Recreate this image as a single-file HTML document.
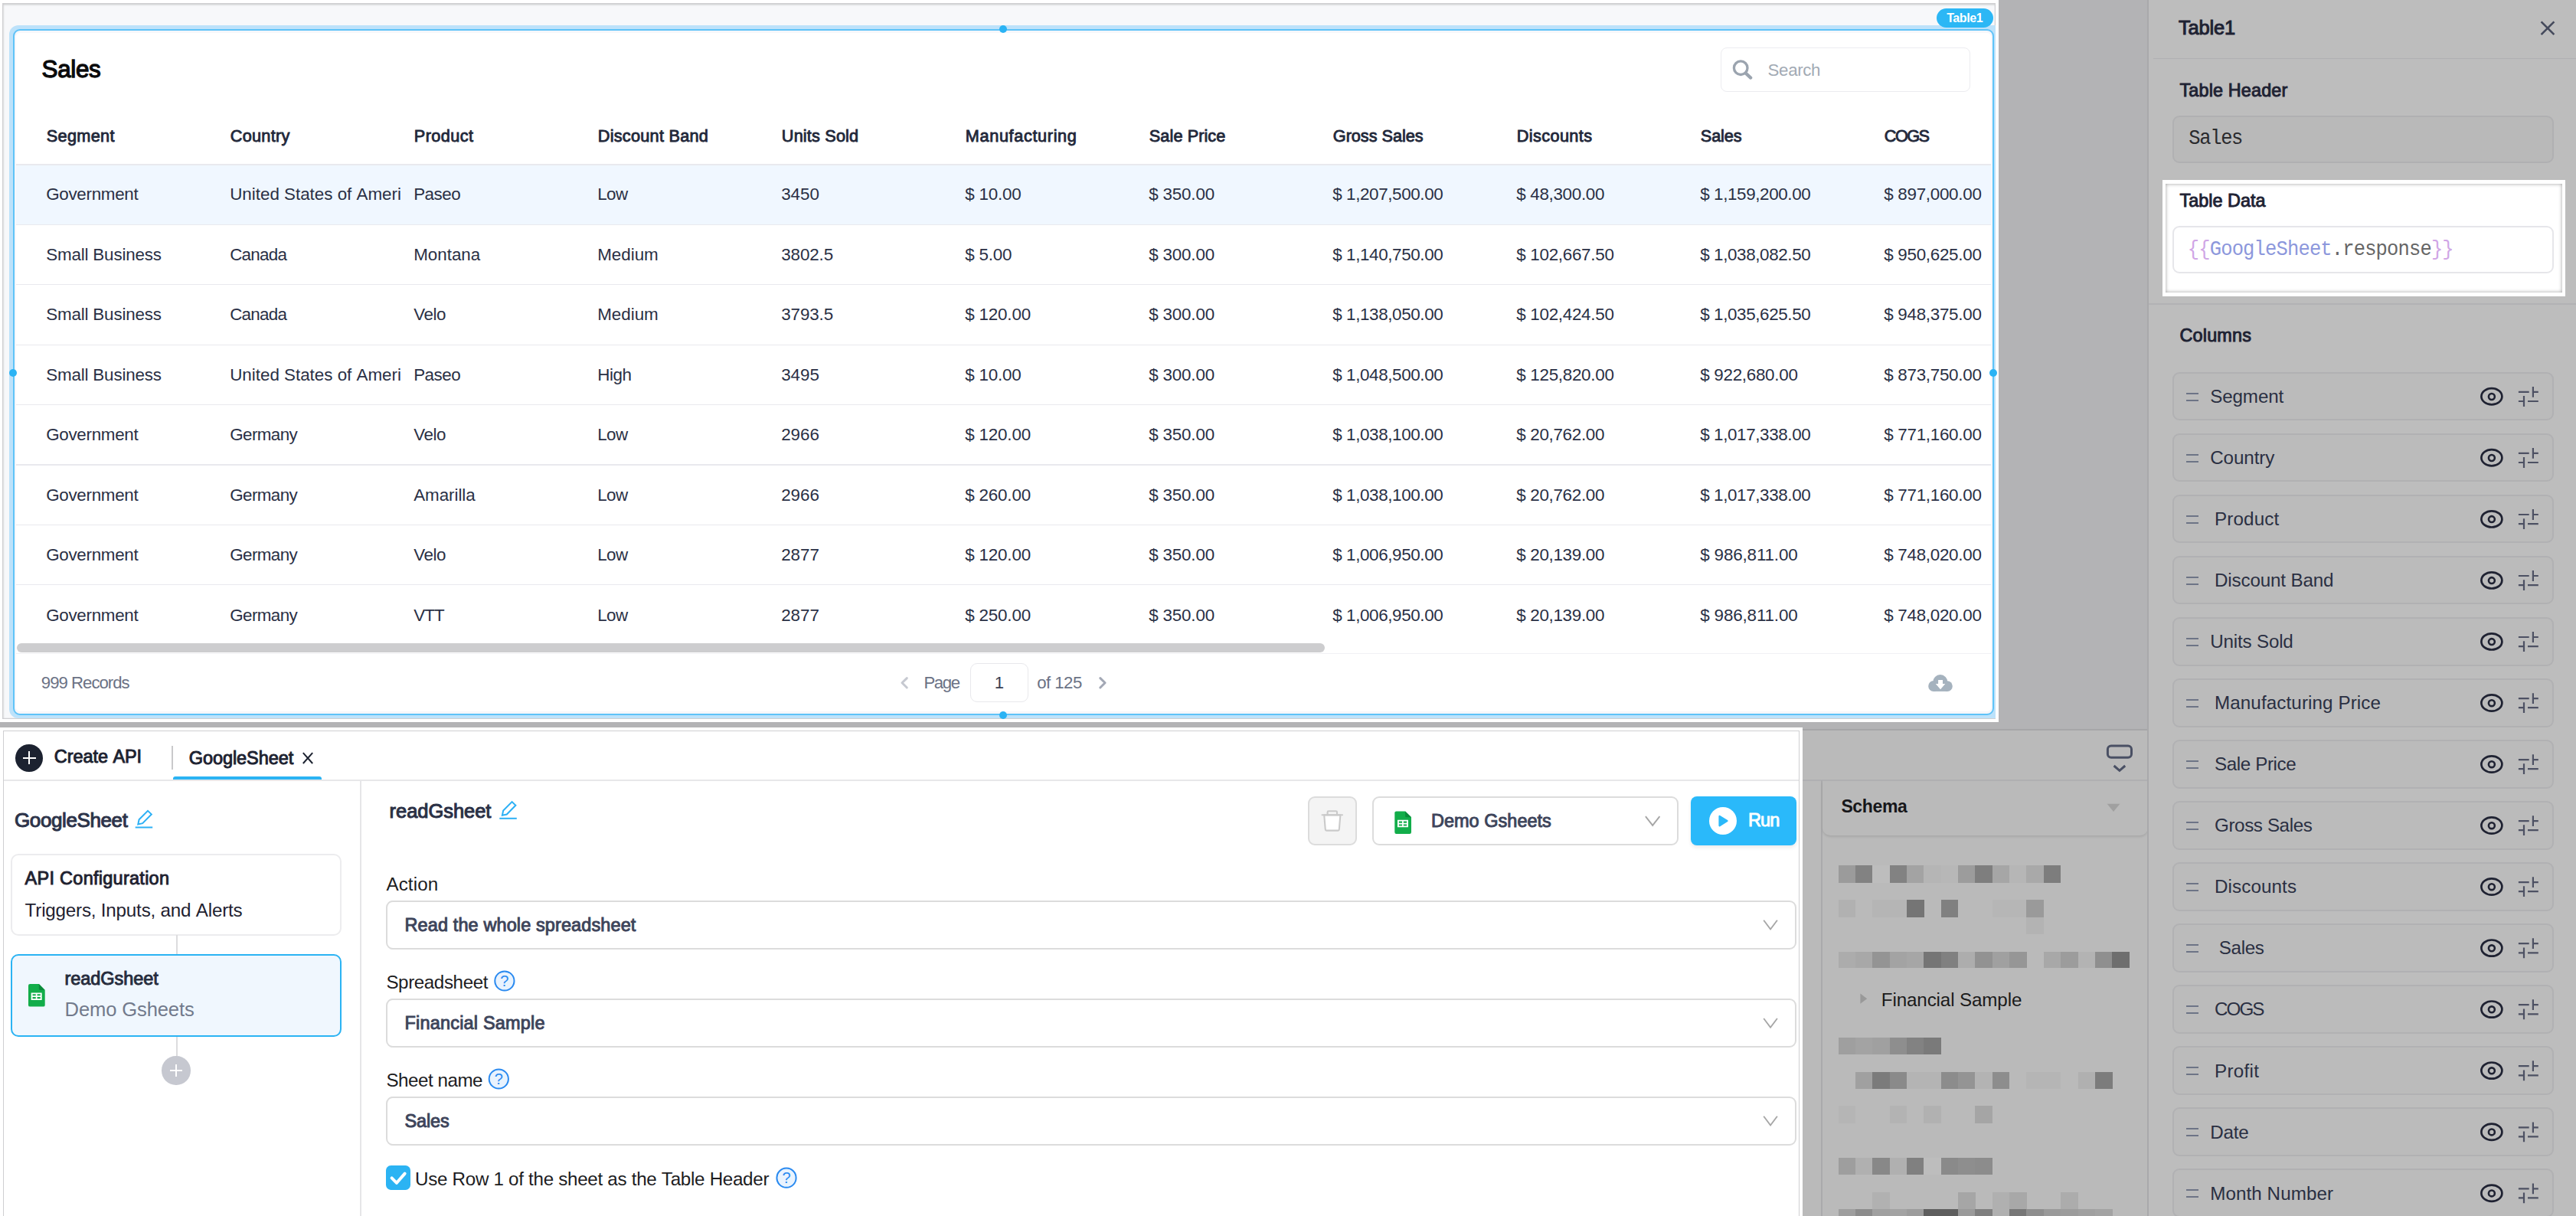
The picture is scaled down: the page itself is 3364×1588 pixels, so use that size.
<!DOCTYPE html>
<html><head><meta charset="utf-8"><title>Appsmith</title>
<style>
html,body{margin:0;padding:0}
body{width:3364px;height:1588px;overflow:hidden;position:relative;background:#b3b3b5;font-family:"Liberation Sans",sans-serif}
.a{position:absolute;box-sizing:border-box}
.t{position:absolute;white-space:nowrap}
svg{position:absolute;overflow:visible}
</style></head><body>
<div class="a" style="left:0.00px;top:0.00px;width:2610.00px;height:943.00px;background:#fff"></div>
<div class="a" style="left:3.20px;top:3.90px;width:2602.80px;height:935.10px;background:#f7f8fa;box-shadow:inset 0 0 0 1.2px #cfcfd2, inset 1px 2px 3px rgba(0,0,0,.2)"></div>
<div class="a" style="left:12.40px;top:33.30px;width:2593.60px;height:905.10px;background:#bde2fa;border-radius:12px 0 0 12px"></div>
<div class="a" style="left:16.90px;top:37.80px;width:2586.90px;height:895.90px;background:#f6f7fb;border:2.4px solid #5fc3f8;border-radius:9px"></div>
<div class="a" style="left:21.40px;top:42.70px;width:2578.30px;height:886.00px;background:#fff;border-radius:5px"></div>
<div class="a" style="left:21.40px;top:214.60px;width:2578.30px;height:78.40px;background:#f0f7ff"></div>
<div class="a" style="left:21.40px;top:214.30px;width:2578.30px;height:1.30px;background:#e9e9ee"></div>
<div class="a" style="left:21.40px;top:292.70px;width:2578.30px;height:1.30px;background:#e9e9ee"></div>
<div class="a" style="left:21.40px;top:371.10px;width:2578.30px;height:1.30px;background:#e9e9ee"></div>
<div class="a" style="left:21.40px;top:449.50px;width:2578.30px;height:1.30px;background:#e9e9ee"></div>
<div class="a" style="left:21.40px;top:527.90px;width:2578.30px;height:1.30px;background:#e9e9ee"></div>
<div class="a" style="left:21.40px;top:606.30px;width:2578.30px;height:1.30px;background:#e9e9ee"></div>
<div class="a" style="left:21.40px;top:684.70px;width:2578.30px;height:1.30px;background:#e9e9ee"></div>
<div class="a" style="left:21.40px;top:763.10px;width:2578.30px;height:1.30px;background:#e9e9ee"></div>
<div class="t" style="left:54.50px;top:73px;font:400 31.4px/35px 'Liberation Sans',sans-serif;color:#0b0b0c;letter-spacing:-0.309px;-webkit-text-stroke:1.26px #0b0b0c;">Sales</div>
<div class="a" style="left:2246.80px;top:62.30px;width:326.20px;height:57.40px;border:1.6px solid #ececf0;border-radius:8px;background:#fff"></div>
<svg style="left:0;top:0;" width="3364" height="1588" viewBox="0 0 3364 1588"><circle cx="2273.2" cy="88.7" r="8.8" fill="none" stroke="#9ba4af" stroke-width="3.3"/><path d="M2279.8 95.6 L2286.2 101.6" stroke="#9ba4af" stroke-width="4.2" stroke-linecap="round"/></svg>
<div class="t" style="left:2308.60px;top:79px;font:400 22.3px/25px 'Liberation Sans',sans-serif;color:#a2aab4;letter-spacing:-0.360px;">Search</div>
<div class="t" style="left:60.80px;top:165px;font:400 21.7px/25px 'Liberation Sans',sans-serif;color:#22283a;letter-spacing:0.307px;-webkit-text-stroke:0.87px #22283a;">Segment</div>
<div class="t" style="left:300.80px;top:165px;font:400 21.7px/25px 'Liberation Sans',sans-serif;color:#22283a;letter-spacing:0.260px;-webkit-text-stroke:0.87px #22283a;">Country</div>
<div class="t" style="left:540.80px;top:165px;font:400 21.7px/25px 'Liberation Sans',sans-serif;color:#22283a;letter-spacing:0.431px;-webkit-text-stroke:0.87px #22283a;">Product</div>
<div class="t" style="left:780.80px;top:165px;font:400 21.7px/25px 'Liberation Sans',sans-serif;color:#22283a;letter-spacing:0.251px;-webkit-text-stroke:0.87px #22283a;">Discount&nbsp;Band</div>
<div class="t" style="left:1020.80px;top:165px;font:400 21.7px/25px 'Liberation Sans',sans-serif;color:#22283a;letter-spacing:0.170px;-webkit-text-stroke:0.87px #22283a;">Units&nbsp;Sold</div>
<div class="t" style="left:1260.80px;top:165px;font:400 21.7px/25px 'Liberation Sans',sans-serif;color:#22283a;letter-spacing:0.638px;-webkit-text-stroke:0.87px #22283a;">Manufacturing</div>
<div class="t" style="left:1500.80px;top:165px;font:400 21.7px/25px 'Liberation Sans',sans-serif;color:#22283a;letter-spacing:0.080px;-webkit-text-stroke:0.87px #22283a;">Sale&nbsp;Price</div>
<div class="t" style="left:1740.80px;top:165px;font:400 21.7px/25px 'Liberation Sans',sans-serif;color:#22283a;letter-spacing:-0.035px;-webkit-text-stroke:0.87px #22283a;">Gross&nbsp;Sales</div>
<div class="t" style="left:1980.80px;top:165px;font:400 21.7px/25px 'Liberation Sans',sans-serif;color:#22283a;letter-spacing:0.380px;-webkit-text-stroke:0.87px #22283a;">Discounts</div>
<div class="t" style="left:2220.80px;top:165px;font:400 21.7px/25px 'Liberation Sans',sans-serif;color:#22283a;letter-spacing:-0.136px;-webkit-text-stroke:0.87px #22283a;">Sales</div>
<div class="t" style="left:2460.80px;top:165px;font:400 21.7px/25px 'Liberation Sans',sans-serif;color:#22283a;letter-spacing:-1.576px;-webkit-text-stroke:0.87px #22283a;">COGS</div>
<div class="t" style="left:60.20px;top:241px;font:400 22.4px/25px 'Liberation Sans',sans-serif;color:#2a3045;letter-spacing:-0.296px;">Government</div>
<div class="t" style="left:300.20px;top:241px;font:400 22.4px/25px 'Liberation Sans',sans-serif;color:#2a3045;letter-spacing:-0.012px;">United&nbsp;States&nbsp;of&nbsp;Ameri</div>
<div class="t" style="left:540.20px;top:241px;font:400 22.4px/25px 'Liberation Sans',sans-serif;color:#2a3045;letter-spacing:-0.503px;">Paseo</div>
<div class="t" style="left:780.20px;top:241px;font:400 22.4px/25px 'Liberation Sans',sans-serif;color:#2a3045;letter-spacing:-0.531px;">Low</div>
<div class="t" style="left:1020.20px;top:241px;font:400 22.4px/25px 'Liberation Sans',sans-serif;color:#2a3045;letter-spacing:-0.038px;">3450</div>
<div class="t" style="left:1260.20px;top:241px;font:400 22.4px/25px 'Liberation Sans',sans-serif;color:#2a3045;letter-spacing:-0.191px;">$&nbsp;10.00</div>
<div class="t" style="left:1500.20px;top:241px;font:400 22.4px/25px 'Liberation Sans',sans-serif;color:#2a3045;letter-spacing:-0.172px;">$&nbsp;350.00</div>
<div class="t" style="left:1740.20px;top:241px;font:400 22.4px/25px 'Liberation Sans',sans-serif;color:#2a3045;letter-spacing:-0.378px;">$&nbsp;1,207,500.00</div>
<div class="t" style="left:1980.20px;top:241px;font:400 22.4px/25px 'Liberation Sans',sans-serif;color:#2a3045;letter-spacing:-0.303px;">$&nbsp;48,300.00</div>
<div class="t" style="left:2220.20px;top:241px;font:400 22.4px/25px 'Liberation Sans',sans-serif;color:#2a3045;letter-spacing:-0.378px;">$&nbsp;1,159,200.00</div>
<div class="t" style="left:2460.20px;top:241px;font:400 22.4px/25px 'Liberation Sans',sans-serif;color:#2a3045;letter-spacing:-0.281px;">$&nbsp;897,000.00</div>
<div class="t" style="left:60.20px;top:320px;font:400 22.4px/25px 'Liberation Sans',sans-serif;color:#2a3045;letter-spacing:-0.173px;">Small&nbsp;Business</div>
<div class="t" style="left:300.20px;top:320px;font:400 22.4px/25px 'Liberation Sans',sans-serif;color:#2a3045;letter-spacing:-0.744px;">Canada</div>
<div class="t" style="left:540.20px;top:320px;font:400 22.4px/25px 'Liberation Sans',sans-serif;color:#2a3045;letter-spacing:-0.010px;">Montana</div>
<div class="t" style="left:780.20px;top:320px;font:400 22.4px/25px 'Liberation Sans',sans-serif;color:#2a3045;letter-spacing:-0.012px;">Medium</div>
<div class="t" style="left:1020.20px;top:320px;font:400 22.4px/25px 'Liberation Sans',sans-serif;color:#2a3045;letter-spacing:-0.099px;">3802.5</div>
<div class="t" style="left:1260.20px;top:320px;font:400 22.4px/25px 'Liberation Sans',sans-serif;color:#2a3045;letter-spacing:-0.216px;">$&nbsp;5.00</div>
<div class="t" style="left:1500.20px;top:320px;font:400 22.4px/25px 'Liberation Sans',sans-serif;color:#2a3045;letter-spacing:-0.172px;">$&nbsp;300.00</div>
<div class="t" style="left:1740.20px;top:320px;font:400 22.4px/25px 'Liberation Sans',sans-serif;color:#2a3045;letter-spacing:-0.378px;">$&nbsp;1,140,750.00</div>
<div class="t" style="left:1980.20px;top:320px;font:400 22.4px/25px 'Liberation Sans',sans-serif;color:#2a3045;letter-spacing:-0.281px;">$&nbsp;102,667.50</div>
<div class="t" style="left:2220.20px;top:320px;font:400 22.4px/25px 'Liberation Sans',sans-serif;color:#2a3045;letter-spacing:-0.378px;">$&nbsp;1,038,082.50</div>
<div class="t" style="left:2460.20px;top:320px;font:400 22.4px/25px 'Liberation Sans',sans-serif;color:#2a3045;letter-spacing:-0.281px;">$&nbsp;950,625.00</div>
<div class="t" style="left:60.20px;top:398px;font:400 22.4px/25px 'Liberation Sans',sans-serif;color:#2a3045;letter-spacing:-0.173px;">Small&nbsp;Business</div>
<div class="t" style="left:300.20px;top:398px;font:400 22.4px/25px 'Liberation Sans',sans-serif;color:#2a3045;letter-spacing:-0.744px;">Canada</div>
<div class="t" style="left:540.20px;top:398px;font:400 22.4px/25px 'Liberation Sans',sans-serif;color:#2a3045;letter-spacing:-0.424px;">Velo</div>
<div class="t" style="left:780.20px;top:398px;font:400 22.4px/25px 'Liberation Sans',sans-serif;color:#2a3045;letter-spacing:-0.012px;">Medium</div>
<div class="t" style="left:1020.20px;top:398px;font:400 22.4px/25px 'Liberation Sans',sans-serif;color:#2a3045;letter-spacing:-0.099px;">3793.5</div>
<div class="t" style="left:1260.20px;top:398px;font:400 22.4px/25px 'Liberation Sans',sans-serif;color:#2a3045;letter-spacing:-0.172px;">$&nbsp;120.00</div>
<div class="t" style="left:1500.20px;top:398px;font:400 22.4px/25px 'Liberation Sans',sans-serif;color:#2a3045;letter-spacing:-0.172px;">$&nbsp;300.00</div>
<div class="t" style="left:1740.20px;top:398px;font:400 22.4px/25px 'Liberation Sans',sans-serif;color:#2a3045;letter-spacing:-0.378px;">$&nbsp;1,138,050.00</div>
<div class="t" style="left:1980.20px;top:398px;font:400 22.4px/25px 'Liberation Sans',sans-serif;color:#2a3045;letter-spacing:-0.281px;">$&nbsp;102,424.50</div>
<div class="t" style="left:2220.20px;top:398px;font:400 22.4px/25px 'Liberation Sans',sans-serif;color:#2a3045;letter-spacing:-0.378px;">$&nbsp;1,035,625.50</div>
<div class="t" style="left:2460.20px;top:398px;font:400 22.4px/25px 'Liberation Sans',sans-serif;color:#2a3045;letter-spacing:-0.281px;">$&nbsp;948,375.00</div>
<div class="t" style="left:60.20px;top:477px;font:400 22.4px/25px 'Liberation Sans',sans-serif;color:#2a3045;letter-spacing:-0.173px;">Small&nbsp;Business</div>
<div class="t" style="left:300.20px;top:477px;font:400 22.4px/25px 'Liberation Sans',sans-serif;color:#2a3045;letter-spacing:-0.012px;">United&nbsp;States&nbsp;of&nbsp;Ameri</div>
<div class="t" style="left:540.20px;top:477px;font:400 22.4px/25px 'Liberation Sans',sans-serif;color:#2a3045;letter-spacing:-0.503px;">Paseo</div>
<div class="t" style="left:780.20px;top:477px;font:400 22.4px/25px 'Liberation Sans',sans-serif;color:#2a3045;letter-spacing:-0.467px;">High</div>
<div class="t" style="left:1020.20px;top:477px;font:400 22.4px/25px 'Liberation Sans',sans-serif;color:#2a3045;letter-spacing:-0.038px;">3495</div>
<div class="t" style="left:1260.20px;top:477px;font:400 22.4px/25px 'Liberation Sans',sans-serif;color:#2a3045;letter-spacing:-0.191px;">$&nbsp;10.00</div>
<div class="t" style="left:1500.20px;top:477px;font:400 22.4px/25px 'Liberation Sans',sans-serif;color:#2a3045;letter-spacing:-0.172px;">$&nbsp;300.00</div>
<div class="t" style="left:1740.20px;top:477px;font:400 22.4px/25px 'Liberation Sans',sans-serif;color:#2a3045;letter-spacing:-0.378px;">$&nbsp;1,048,500.00</div>
<div class="t" style="left:1980.20px;top:477px;font:400 22.4px/25px 'Liberation Sans',sans-serif;color:#2a3045;letter-spacing:-0.281px;">$&nbsp;125,820.00</div>
<div class="t" style="left:2220.20px;top:477px;font:400 22.4px/25px 'Liberation Sans',sans-serif;color:#2a3045;letter-spacing:-0.281px;">$&nbsp;922,680.00</div>
<div class="t" style="left:2460.20px;top:477px;font:400 22.4px/25px 'Liberation Sans',sans-serif;color:#2a3045;letter-spacing:-0.281px;">$&nbsp;873,750.00</div>
<div class="t" style="left:60.20px;top:555px;font:400 22.4px/25px 'Liberation Sans',sans-serif;color:#2a3045;letter-spacing:-0.296px;">Government</div>
<div class="t" style="left:300.20px;top:555px;font:400 22.4px/25px 'Liberation Sans',sans-serif;color:#2a3045;letter-spacing:-0.588px;">Germany</div>
<div class="t" style="left:540.20px;top:555px;font:400 22.4px/25px 'Liberation Sans',sans-serif;color:#2a3045;letter-spacing:-0.424px;">Velo</div>
<div class="t" style="left:780.20px;top:555px;font:400 22.4px/25px 'Liberation Sans',sans-serif;color:#2a3045;letter-spacing:-0.531px;">Low</div>
<div class="t" style="left:1020.20px;top:555px;font:400 22.4px/25px 'Liberation Sans',sans-serif;color:#2a3045;letter-spacing:-0.038px;">2966</div>
<div class="t" style="left:1260.20px;top:555px;font:400 22.4px/25px 'Liberation Sans',sans-serif;color:#2a3045;letter-spacing:-0.172px;">$&nbsp;120.00</div>
<div class="t" style="left:1500.20px;top:555px;font:400 22.4px/25px 'Liberation Sans',sans-serif;color:#2a3045;letter-spacing:-0.172px;">$&nbsp;350.00</div>
<div class="t" style="left:1740.20px;top:555px;font:400 22.4px/25px 'Liberation Sans',sans-serif;color:#2a3045;letter-spacing:-0.378px;">$&nbsp;1,038,100.00</div>
<div class="t" style="left:1980.20px;top:555px;font:400 22.4px/25px 'Liberation Sans',sans-serif;color:#2a3045;letter-spacing:-0.303px;">$&nbsp;20,762.00</div>
<div class="t" style="left:2220.20px;top:555px;font:400 22.4px/25px 'Liberation Sans',sans-serif;color:#2a3045;letter-spacing:-0.378px;">$&nbsp;1,017,338.00</div>
<div class="t" style="left:2460.20px;top:555px;font:400 22.4px/25px 'Liberation Sans',sans-serif;color:#2a3045;letter-spacing:-0.281px;">$&nbsp;771,160.00</div>
<div class="t" style="left:60.20px;top:634px;font:400 22.4px/25px 'Liberation Sans',sans-serif;color:#2a3045;letter-spacing:-0.296px;">Government</div>
<div class="t" style="left:300.20px;top:634px;font:400 22.4px/25px 'Liberation Sans',sans-serif;color:#2a3045;letter-spacing:-0.588px;">Germany</div>
<div class="t" style="left:540.20px;top:634px;font:400 22.4px/25px 'Liberation Sans',sans-serif;color:#2a3045;letter-spacing:-0.051px;">Amarilla</div>
<div class="t" style="left:780.20px;top:634px;font:400 22.4px/25px 'Liberation Sans',sans-serif;color:#2a3045;letter-spacing:-0.531px;">Low</div>
<div class="t" style="left:1020.20px;top:634px;font:400 22.4px/25px 'Liberation Sans',sans-serif;color:#2a3045;letter-spacing:-0.038px;">2966</div>
<div class="t" style="left:1260.20px;top:634px;font:400 22.4px/25px 'Liberation Sans',sans-serif;color:#2a3045;letter-spacing:-0.172px;">$&nbsp;260.00</div>
<div class="t" style="left:1500.20px;top:634px;font:400 22.4px/25px 'Liberation Sans',sans-serif;color:#2a3045;letter-spacing:-0.172px;">$&nbsp;350.00</div>
<div class="t" style="left:1740.20px;top:634px;font:400 22.4px/25px 'Liberation Sans',sans-serif;color:#2a3045;letter-spacing:-0.378px;">$&nbsp;1,038,100.00</div>
<div class="t" style="left:1980.20px;top:634px;font:400 22.4px/25px 'Liberation Sans',sans-serif;color:#2a3045;letter-spacing:-0.303px;">$&nbsp;20,762.00</div>
<div class="t" style="left:2220.20px;top:634px;font:400 22.4px/25px 'Liberation Sans',sans-serif;color:#2a3045;letter-spacing:-0.378px;">$&nbsp;1,017,338.00</div>
<div class="t" style="left:2460.20px;top:634px;font:400 22.4px/25px 'Liberation Sans',sans-serif;color:#2a3045;letter-spacing:-0.281px;">$&nbsp;771,160.00</div>
<div class="t" style="left:60.20px;top:712px;font:400 22.4px/25px 'Liberation Sans',sans-serif;color:#2a3045;letter-spacing:-0.296px;">Government</div>
<div class="t" style="left:300.20px;top:712px;font:400 22.4px/25px 'Liberation Sans',sans-serif;color:#2a3045;letter-spacing:-0.588px;">Germany</div>
<div class="t" style="left:540.20px;top:712px;font:400 22.4px/25px 'Liberation Sans',sans-serif;color:#2a3045;letter-spacing:-0.424px;">Velo</div>
<div class="t" style="left:780.20px;top:712px;font:400 22.4px/25px 'Liberation Sans',sans-serif;color:#2a3045;letter-spacing:-0.531px;">Low</div>
<div class="t" style="left:1020.20px;top:712px;font:400 22.4px/25px 'Liberation Sans',sans-serif;color:#2a3045;letter-spacing:-0.038px;">2877</div>
<div class="t" style="left:1260.20px;top:712px;font:400 22.4px/25px 'Liberation Sans',sans-serif;color:#2a3045;letter-spacing:-0.172px;">$&nbsp;120.00</div>
<div class="t" style="left:1500.20px;top:712px;font:400 22.4px/25px 'Liberation Sans',sans-serif;color:#2a3045;letter-spacing:-0.172px;">$&nbsp;350.00</div>
<div class="t" style="left:1740.20px;top:712px;font:400 22.4px/25px 'Liberation Sans',sans-serif;color:#2a3045;letter-spacing:-0.378px;">$&nbsp;1,006,950.00</div>
<div class="t" style="left:1980.20px;top:712px;font:400 22.4px/25px 'Liberation Sans',sans-serif;color:#2a3045;letter-spacing:-0.303px;">$&nbsp;20,139.00</div>
<div class="t" style="left:2220.20px;top:712px;font:400 22.4px/25px 'Liberation Sans',sans-serif;color:#2a3045;letter-spacing:-0.142px;">$&nbsp;986,811.00</div>
<div class="t" style="left:2460.20px;top:712px;font:400 22.4px/25px 'Liberation Sans',sans-serif;color:#2a3045;letter-spacing:-0.281px;">$&nbsp;748,020.00</div>
<div class="t" style="left:60.20px;top:791px;font:400 22.4px/25px 'Liberation Sans',sans-serif;color:#2a3045;letter-spacing:-0.296px;">Government</div>
<div class="t" style="left:300.20px;top:791px;font:400 22.4px/25px 'Liberation Sans',sans-serif;color:#2a3045;letter-spacing:-0.588px;">Germany</div>
<div class="t" style="left:540.20px;top:791px;font:400 22.4px/25px 'Liberation Sans',sans-serif;color:#2a3045;letter-spacing:-0.936px;">VTT</div>
<div class="t" style="left:780.20px;top:791px;font:400 22.4px/25px 'Liberation Sans',sans-serif;color:#2a3045;letter-spacing:-0.531px;">Low</div>
<div class="t" style="left:1020.20px;top:791px;font:400 22.4px/25px 'Liberation Sans',sans-serif;color:#2a3045;letter-spacing:-0.038px;">2877</div>
<div class="t" style="left:1260.20px;top:791px;font:400 22.4px/25px 'Liberation Sans',sans-serif;color:#2a3045;letter-spacing:-0.172px;">$&nbsp;250.00</div>
<div class="t" style="left:1500.20px;top:791px;font:400 22.4px/25px 'Liberation Sans',sans-serif;color:#2a3045;letter-spacing:-0.172px;">$&nbsp;350.00</div>
<div class="t" style="left:1740.20px;top:791px;font:400 22.4px/25px 'Liberation Sans',sans-serif;color:#2a3045;letter-spacing:-0.378px;">$&nbsp;1,006,950.00</div>
<div class="t" style="left:1980.20px;top:791px;font:400 22.4px/25px 'Liberation Sans',sans-serif;color:#2a3045;letter-spacing:-0.303px;">$&nbsp;20,139.00</div>
<div class="t" style="left:2220.20px;top:791px;font:400 22.4px/25px 'Liberation Sans',sans-serif;color:#2a3045;letter-spacing:-0.142px;">$&nbsp;986,811.00</div>
<div class="t" style="left:2460.20px;top:791px;font:400 22.4px/25px 'Liberation Sans',sans-serif;color:#2a3045;letter-spacing:-0.281px;">$&nbsp;748,020.00</div>
<div class="a" style="left:21.40px;top:836.00px;width:2578.30px;height:18.00px;background:#fff"></div>
<div class="a" style="left:22.00px;top:840.30px;width:1708.00px;height:11.80px;background:#cdcdcf;border-radius:6px"></div>
<div class="a" style="left:21.40px;top:853.20px;width:2578.30px;height:1.20px;background:#f1f1f4"></div>
<div class="t" style="left:53.80px;top:879px;font:400 22.2px/25px 'Liberation Sans',sans-serif;color:#6b7285;letter-spacing:-0.988px;">999&nbsp;Records</div>
<div class="t" style="left:1206.40px;top:879px;font:400 22.2px/25px 'Liberation Sans',sans-serif;color:#6b7285;letter-spacing:-1.337px;">Page</div>
<div class="a" style="left:1266.80px;top:866.00px;width:76.60px;height:51.20px;border:1.7px solid #e8e8ec;border-radius:9px;background:#fff"></div>
<div class="t" style="left:1304.80px;transform:translateX(-50%);top:879px;font:400 22.2px/25px 'Liberation Sans',sans-serif;color:#3a3f52;letter-spacing:0.000px;">1</div>
<div class="t" style="left:1354.20px;top:879px;font:400 22.2px/25px 'Liberation Sans',sans-serif;color:#6b7285;letter-spacing:-0.520px;">of&nbsp;125</div>
<svg style="left:0;top:0;" width="3364" height="1588" viewBox="0 0 3364 1588"><path d="M1184.3 885.6 L1178 891.8 L1184.3 898" fill="none" stroke="#c6c9d1" stroke-width="3" stroke-linecap="round" stroke-linejoin="round"/><path d="M1436.8 885.6 L1443.1 891.8 L1436.8 898" fill="none" stroke="#a3a8b5" stroke-width="3" stroke-linecap="round" stroke-linejoin="round"/></svg>
<svg style="left:0;top:0;" width="3364" height="1588" viewBox="0 0 3364 1588"><g fill="#a5b2be"><circle cx="2533.8" cy="890.7" r="9.6"/><circle cx="2525.1" cy="896" r="6.9"/><circle cx="2543" cy="896.1" r="6.8"/><rect x="2525" y="893" width="18" height="9.9"/></g><path d="M2531.1 888.1 h5.9 v4.8 h3.3 l-6.25 7.4 l-6.25 -7.4 h3.3 Z" fill="#fff"/></svg>
<div class="a" style="left:1305.00px;top:33.30px;width:10.00px;height:10.00px;background:#2bb3f4;border-radius:50%"></div>
<div class="a" style="left:1304.80px;top:929.20px;width:10.00px;height:10.00px;background:#2bb3f4;border-radius:50%"></div>
<div class="a" style="left:11.80px;top:481.70px;width:10.00px;height:10.00px;background:#2bb3f4;border-radius:50%"></div>
<div class="a" style="left:2597.80px;top:482.00px;width:10.00px;height:10.00px;background:#2bb3f4;border-radius:50%"></div>
<div class="a" style="left:2529.40px;top:10.90px;width:73.90px;height:24.80px;background:#2cb7f5;border-radius:12.5px"></div>
<div class="t" style="left:2542.20px;top:15px;font:700 16px/17px 'Liberation Sans',sans-serif;color:#fff;letter-spacing:-0.417px;">Table1</div>
<div class="a" style="left:0.00px;top:951.50px;width:2805.00px;height:640.00px;background:#bababa;border-top:2px solid #a6a6a8"></div>
<div class="a" style="left:2354.00px;top:1018.00px;width:450.00px;height:1.60px;background:#b0b0b2"></div>
<div class="a" style="left:2377.80px;top:1019.00px;width:2.00px;height:570.00px;background:#aaaaac"></div>
<div class="a" style="left:2380.00px;top:1019.50px;width:424.50px;height:71.00px;background:#bababa;border-radius:0 0 10px 10px;box-shadow:0 2px 3px rgba(0,0,0,.10)"></div>
<div class="t" style="left:2404.40px;top:1040px;font:700 23px/26px 'Liberation Sans',sans-serif;color:#17171a;letter-spacing:-0.369px;">Schema</div>
<svg style="left:0;top:0;" width="3364" height="1588" viewBox="0 0 3364 1588"><path d="M2751.7 1049.8 L2768.4 1049.8 L2760 1060 Z" fill="#a0a0a0"/><rect x="2752.4" y="973.9" width="31.1" height="15.3" rx="4.5" fill="none" stroke="#4a5064" stroke-width="3"/><path d="M2760.6 1000 L2767.9 1006.3 L2775.2 1000" fill="none" stroke="#4a5064" stroke-width="3"/><path d="M2429.4 1297.5 L2438.2 1304.2 L2429.4 1310.8 Z" fill="#999"/></svg>
<div class="t" style="left:2456.80px;top:1292px;font:400 24.2px/27px 'Liberation Sans',sans-serif;color:#1a1a1a;letter-spacing:-0.133px;">Financial&nbsp;Sample</div>
<div class="a" style="left:2400.50px;top:1130.20px;width:22.66px;height:22.50px;background:#9b9b9b"></div>
<div class="a" style="left:2422.86px;top:1130.20px;width:22.66px;height:22.50px;background:#828282"></div>
<div class="a" style="left:2445.22px;top:1130.20px;width:22.66px;height:22.50px;background:#bdbdbd"></div>
<div class="a" style="left:2467.58px;top:1130.20px;width:22.66px;height:22.50px;background:#828282"></div>
<div class="a" style="left:2489.94px;top:1130.20px;width:22.66px;height:22.50px;background:#a3a3a3"></div>
<div class="a" style="left:2512.30px;top:1130.20px;width:22.66px;height:22.50px;background:#b5b5b5"></div>
<div class="a" style="left:2534.66px;top:1130.20px;width:22.66px;height:22.50px;background:#b7b7b7"></div>
<div class="a" style="left:2557.02px;top:1130.20px;width:22.66px;height:22.50px;background:#9c9c9c"></div>
<div class="a" style="left:2579.38px;top:1130.20px;width:22.66px;height:22.50px;background:#7e7e7e"></div>
<div class="a" style="left:2601.74px;top:1130.20px;width:22.66px;height:22.50px;background:#a6a6a6"></div>
<div class="a" style="left:2624.10px;top:1130.20px;width:22.66px;height:22.50px;background:#b6b6b6"></div>
<div class="a" style="left:2646.46px;top:1130.20px;width:22.66px;height:22.50px;background:#a9a9a9"></div>
<div class="a" style="left:2668.82px;top:1130.20px;width:22.66px;height:22.50px;background:#7d7d7d"></div>
<div class="a" style="left:2400.50px;top:1175.00px;width:22.66px;height:22.50px;background:#b1b1b1"></div>
<div class="a" style="left:2445.22px;top:1175.00px;width:22.66px;height:22.50px;background:#b5b5b5"></div>
<div class="a" style="left:2467.58px;top:1175.00px;width:22.66px;height:22.50px;background:#b5b5b5"></div>
<div class="a" style="left:2489.94px;top:1175.00px;width:22.66px;height:22.50px;background:#757575"></div>
<div class="a" style="left:2534.66px;top:1175.00px;width:22.66px;height:22.50px;background:#808080"></div>
<div class="a" style="left:2601.74px;top:1175.00px;width:22.66px;height:22.50px;background:#b6b6b6"></div>
<div class="a" style="left:2624.10px;top:1175.00px;width:22.66px;height:22.50px;background:#b6b6b6"></div>
<div class="a" style="left:2646.46px;top:1175.00px;width:22.66px;height:22.50px;background:#9a9a9a"></div>
<div class="a" style="left:2646.46px;top:1197.50px;width:22.66px;height:22.10px;background:#b3b3b3"></div>
<div class="a" style="left:2400.50px;top:1242.50px;width:22.66px;height:21.30px;background:#acacac"></div>
<div class="a" style="left:2422.86px;top:1242.50px;width:22.66px;height:21.30px;background:#a8a8a8"></div>
<div class="a" style="left:2445.22px;top:1242.50px;width:22.66px;height:21.30px;background:#949494"></div>
<div class="a" style="left:2467.58px;top:1242.50px;width:22.66px;height:21.30px;background:#a3a3a3"></div>
<div class="a" style="left:2489.94px;top:1242.50px;width:22.66px;height:21.30px;background:#a6a6a6"></div>
<div class="a" style="left:2512.30px;top:1242.50px;width:22.66px;height:21.30px;background:#757575"></div>
<div class="a" style="left:2534.66px;top:1242.50px;width:22.66px;height:21.30px;background:#808080"></div>
<div class="a" style="left:2557.02px;top:1242.50px;width:22.66px;height:21.30px;background:#adadad"></div>
<div class="a" style="left:2579.38px;top:1242.50px;width:22.66px;height:21.30px;background:#929292"></div>
<div class="a" style="left:2601.74px;top:1242.50px;width:22.66px;height:21.30px;background:#a0a0a0"></div>
<div class="a" style="left:2624.10px;top:1242.50px;width:22.66px;height:21.30px;background:#969696"></div>
<div class="a" style="left:2668.82px;top:1242.50px;width:22.66px;height:21.30px;background:#a8a8a8"></div>
<div class="a" style="left:2691.18px;top:1242.50px;width:22.66px;height:21.30px;background:#9c9c9c"></div>
<div class="a" style="left:2713.54px;top:1242.50px;width:22.66px;height:21.30px;background:#b3b3b3"></div>
<div class="a" style="left:2735.90px;top:1242.50px;width:22.66px;height:21.30px;background:#8f8f8f"></div>
<div class="a" style="left:2758.26px;top:1242.50px;width:22.66px;height:21.30px;background:#6e6e6e"></div>
<div class="a" style="left:2400.50px;top:1355.00px;width:22.66px;height:22.00px;background:#9f9f9f"></div>
<div class="a" style="left:2422.86px;top:1355.00px;width:22.66px;height:22.00px;background:#a3a3a3"></div>
<div class="a" style="left:2445.22px;top:1355.00px;width:22.66px;height:22.00px;background:#a0a0a0"></div>
<div class="a" style="left:2467.58px;top:1355.00px;width:22.66px;height:22.00px;background:#8e8e8e"></div>
<div class="a" style="left:2489.94px;top:1355.00px;width:22.66px;height:22.00px;background:#828282"></div>
<div class="a" style="left:2512.30px;top:1355.00px;width:22.66px;height:22.00px;background:#7a7a7a"></div>
<div class="a" style="left:2422.86px;top:1400.00px;width:22.66px;height:22.00px;background:#a0a0a0"></div>
<div class="a" style="left:2445.22px;top:1400.00px;width:22.66px;height:22.00px;background:#7b7b7b"></div>
<div class="a" style="left:2467.58px;top:1400.00px;width:22.66px;height:22.00px;background:#8a8a8a"></div>
<div class="a" style="left:2489.94px;top:1400.00px;width:22.66px;height:22.00px;background:#b4b4b4"></div>
<div class="a" style="left:2512.30px;top:1400.00px;width:22.66px;height:22.00px;background:#b4b4b4"></div>
<div class="a" style="left:2534.66px;top:1400.00px;width:22.66px;height:22.00px;background:#8c8c8c"></div>
<div class="a" style="left:2557.02px;top:1400.00px;width:22.66px;height:22.00px;background:#949494"></div>
<div class="a" style="left:2579.38px;top:1400.00px;width:22.66px;height:22.00px;background:#b3b3b3"></div>
<div class="a" style="left:2601.74px;top:1400.00px;width:22.66px;height:22.00px;background:#8d8d8d"></div>
<div class="a" style="left:2646.46px;top:1400.00px;width:22.66px;height:22.00px;background:#b5b5b5"></div>
<div class="a" style="left:2668.82px;top:1400.00px;width:22.66px;height:22.00px;background:#b5b5b5"></div>
<div class="a" style="left:2713.54px;top:1400.00px;width:22.66px;height:22.00px;background:#b0b0b0"></div>
<div class="a" style="left:2735.90px;top:1400.00px;width:22.66px;height:22.00px;background:#7c7c7c"></div>
<div class="a" style="left:2400.50px;top:1444.00px;width:22.66px;height:22.50px;background:#b5b5b5"></div>
<div class="a" style="left:2467.58px;top:1444.00px;width:22.66px;height:22.50px;background:#b3b3b3"></div>
<div class="a" style="left:2512.30px;top:1444.00px;width:22.66px;height:22.50px;background:#b1b1b1"></div>
<div class="a" style="left:2579.38px;top:1444.00px;width:22.66px;height:22.50px;background:#a5a5a5"></div>
<div class="a" style="left:2400.50px;top:1511.50px;width:22.66px;height:22.50px;background:#9e9e9e"></div>
<div class="a" style="left:2422.86px;top:1511.50px;width:22.66px;height:22.50px;background:#b0b0b0"></div>
<div class="a" style="left:2445.22px;top:1511.50px;width:22.66px;height:22.50px;background:#888888"></div>
<div class="a" style="left:2467.58px;top:1511.50px;width:22.66px;height:22.50px;background:#b0b0b0"></div>
<div class="a" style="left:2489.94px;top:1511.50px;width:22.66px;height:22.50px;background:#808080"></div>
<div class="a" style="left:2512.30px;top:1511.50px;width:22.66px;height:22.50px;background:#bdbdbd"></div>
<div class="a" style="left:2534.66px;top:1511.50px;width:22.66px;height:22.50px;background:#8a8a8a"></div>
<div class="a" style="left:2557.02px;top:1511.50px;width:22.66px;height:22.50px;background:#8e8e8e"></div>
<div class="a" style="left:2579.38px;top:1511.50px;width:22.66px;height:22.50px;background:#8c8c8c"></div>
<div class="a" style="left:2445.22px;top:1556.50px;width:22.66px;height:22.50px;background:#b1b1b1"></div>
<div class="a" style="left:2557.02px;top:1556.50px;width:22.66px;height:22.50px;background:#a6a6a6"></div>
<div class="a" style="left:2601.74px;top:1556.50px;width:22.66px;height:22.50px;background:#b0b0b0"></div>
<div class="a" style="left:2624.10px;top:1556.50px;width:22.66px;height:22.50px;background:#a8a8a8"></div>
<div class="a" style="left:2691.18px;top:1556.50px;width:22.66px;height:22.50px;background:#acacac"></div>
<div class="a" style="left:2400.50px;top:1579.00px;width:22.66px;height:12.00px;background:#9e9e9e"></div>
<div class="a" style="left:2422.86px;top:1579.00px;width:22.66px;height:12.00px;background:#8c8c8c"></div>
<div class="a" style="left:2445.22px;top:1579.00px;width:22.66px;height:12.00px;background:#a0a0a0"></div>
<div class="a" style="left:2467.58px;top:1579.00px;width:22.66px;height:12.00px;background:#a3a3a3"></div>
<div class="a" style="left:2489.94px;top:1579.00px;width:22.66px;height:12.00px;background:#9c9c9c"></div>
<div class="a" style="left:2512.30px;top:1579.00px;width:22.66px;height:12.00px;background:#5e5e5e"></div>
<div class="a" style="left:2534.66px;top:1579.00px;width:22.66px;height:12.00px;background:#5e5e5e"></div>
<div class="a" style="left:2557.02px;top:1579.00px;width:22.66px;height:12.00px;background:#9a9a9a"></div>
<div class="a" style="left:2579.38px;top:1579.00px;width:22.66px;height:12.00px;background:#7f7f7f"></div>
<div class="a" style="left:2601.74px;top:1579.00px;width:22.66px;height:12.00px;background:#b0b0b0"></div>
<div class="a" style="left:2624.10px;top:1579.00px;width:22.66px;height:12.00px;background:#777777"></div>
<div class="a" style="left:2646.46px;top:1579.00px;width:22.66px;height:12.00px;background:#8e8e8e"></div>
<div class="a" style="left:2668.82px;top:1579.00px;width:22.66px;height:12.00px;background:#9a9a9a"></div>
<div class="a" style="left:2691.18px;top:1579.00px;width:22.66px;height:12.00px;background:#9c9c9c"></div>
<div class="a" style="left:2713.54px;top:1579.00px;width:22.66px;height:12.00px;background:#a0a0a0"></div>
<div class="a" style="left:2735.90px;top:1579.00px;width:22.66px;height:12.00px;background:#a3a3a3"></div>
<div class="a" style="left:2804.00px;top:0.00px;width:560.00px;height:1588.00px;background:#bdbdbd;border-left:2px solid #a9a9ab"></div>
<div class="t" style="left:2845.00px;top:22px;font:400 25.5px/28px 'Liberation Sans',sans-serif;color:#1e2233;letter-spacing:-0.191px;-webkit-text-stroke:1.02px #1e2233;">Table1</div>
<svg style="left:0;top:0;" width="3364" height="1588" viewBox="0 0 3364 1588"><path d="M3318.6 28.4 L3335.4 45.2 M3335.4 28.4 L3318.6 45.2" stroke="#454a5c" stroke-width="2.6" fill="none"/></svg>
<div class="a" style="left:2812.00px;top:75.90px;width:552.00px;height:1.60px;background:#b0b0b2"></div>
<div class="t" style="left:2846.50px;top:105px;font:400 23.4px/26px 'Liberation Sans',sans-serif;color:#1e2233;letter-spacing:0.151px;-webkit-text-stroke:0.94px #1e2233;">Table&nbsp;Header</div>
<div class="a" style="left:2836.90px;top:150.90px;width:498.60px;height:62.10px;background:#b9b9b9;border:2px solid #b0b0b2;border-radius:9px"></div>
<div class="t" style="left:2858.30px;top:167px;font:400 25.5px/29px 'Liberation Mono',monospace;color:#2a2a2d;letter-spacing:-1.350px;transform:scaleY(1.1);transform-origin:0 21px;">Sales</div>
<div class="a" style="left:2823.80px;top:234.50px;width:526.70px;height:152.50px;background:#fff"></div>
<div class="a" style="left:2827.70px;top:239.60px;width:518.20px;height:142.80px;background:#fff;box-shadow:inset 0 0 5px rgba(0,0,0,.38)"></div>
<div class="t" style="left:2846.50px;top:249px;font:400 23.4px/26px 'Liberation Sans',sans-serif;color:#1e2233;letter-spacing:0.013px;-webkit-text-stroke:0.94px #1e2233;">Table&nbsp;Data</div>
<div class="a" style="left:2836.90px;top:294.90px;width:498.60px;height:62.60px;background:#fff;border:2px solid #e6e6ea;border-radius:9px"></div>
<div class="t" style="left:2856.80px;top:312px;font:400 25.5px/29px 'Liberation Mono',monospace;color:#d0a6e6;letter-spacing:-0.840px;transform:scaleY(1.1);transform-origin:0 21px;">{{</div>
<div class="t" style="left:2885.72px;top:312px;font:400 25.5px/29px 'Liberation Mono',monospace;color:#8c97dc;letter-spacing:-0.840px;transform:scaleY(1.1);transform-origin:0 21px;">GoogleSheet</div>
<div class="t" style="left:3044.78px;top:312px;font:400 25.5px/29px 'Liberation Mono',monospace;color:#666;letter-spacing:-0.840px;transform:scaleY(1.1);transform-origin:0 21px;">.response</div>
<div class="t" style="left:3174.92px;top:312px;font:400 25.5px/29px 'Liberation Mono',monospace;color:#d0a6e6;letter-spacing:-0.840px;transform:scaleY(1.1);transform-origin:0 21px;">}}</div>
<div class="a" style="left:2806.00px;top:395.90px;width:558.00px;height:2.00px;background:#b2b2b4"></div>
<div class="t" style="left:2846.50px;top:425px;font:400 23.4px/26px 'Liberation Sans',sans-serif;color:#1e2233;letter-spacing:0.181px;-webkit-text-stroke:0.94px #1e2233;">Columns</div>
<div class="a" style="left:2836.70px;top:485.80px;width:498.70px;height:63.60px;background:#bbbbbb;border:2px solid #b1b1b3;border-radius:9px"></div>
<div class="a" style="left:2854.80px;top:512.90px;width:15.90px;height:2.20px;background:#6d7486"></div>
<div class="a" style="left:2854.80px;top:521.80px;width:15.90px;height:2.20px;background:#6d7486"></div>
<div class="t" style="left:2886.20px;top:504px;font:400 24.2px/27px 'Liberation Sans',sans-serif;color:#2a2f42;letter-spacing:-0.123px;">Segment</div>
<div class="a" style="left:2836.70px;top:565.83px;width:498.70px;height:63.60px;background:#bbbbbb;border:2px solid #b1b1b3;border-radius:9px"></div>
<div class="a" style="left:2854.80px;top:592.93px;width:15.90px;height:2.20px;background:#6d7486"></div>
<div class="a" style="left:2854.80px;top:601.83px;width:15.90px;height:2.20px;background:#6d7486"></div>
<div class="t" style="left:2886.20px;top:584px;font:400 24.2px/27px 'Liberation Sans',sans-serif;color:#2a2f42;letter-spacing:-0.091px;">Country</div>
<div class="a" style="left:2836.70px;top:645.86px;width:498.70px;height:63.60px;background:#bbbbbb;border:2px solid #b1b1b3;border-radius:9px"></div>
<div class="a" style="left:2854.80px;top:672.96px;width:15.90px;height:2.20px;background:#6d7486"></div>
<div class="a" style="left:2854.80px;top:681.86px;width:15.90px;height:2.20px;background:#6d7486"></div>
<div class="t" style="left:2892.00px;top:664px;font:400 24.2px/27px 'Liberation Sans',sans-serif;color:#2a2f42;letter-spacing:0.157px;">Product</div>
<div class="a" style="left:2836.70px;top:725.89px;width:498.70px;height:63.60px;background:#bbbbbb;border:2px solid #b1b1b3;border-radius:9px"></div>
<div class="a" style="left:2854.80px;top:752.99px;width:15.90px;height:2.20px;background:#6d7486"></div>
<div class="a" style="left:2854.80px;top:761.89px;width:15.90px;height:2.20px;background:#6d7486"></div>
<div class="t" style="left:2892.00px;top:744px;font:400 24.2px/27px 'Liberation Sans',sans-serif;color:#2a2f42;letter-spacing:-0.153px;">Discount&nbsp;Band</div>
<div class="a" style="left:2836.70px;top:805.92px;width:498.70px;height:63.60px;background:#bbbbbb;border:2px solid #b1b1b3;border-radius:9px"></div>
<div class="a" style="left:2854.80px;top:833.02px;width:15.90px;height:2.20px;background:#6d7486"></div>
<div class="a" style="left:2854.80px;top:841.92px;width:15.90px;height:2.20px;background:#6d7486"></div>
<div class="t" style="left:2886.20px;top:824px;font:400 24.2px/27px 'Liberation Sans',sans-serif;color:#2a2f42;letter-spacing:-0.179px;">Units&nbsp;Sold</div>
<div class="a" style="left:2836.70px;top:885.95px;width:498.70px;height:63.60px;background:#bbbbbb;border:2px solid #b1b1b3;border-radius:9px"></div>
<div class="a" style="left:2854.80px;top:913.05px;width:15.90px;height:2.20px;background:#6d7486"></div>
<div class="a" style="left:2854.80px;top:921.95px;width:15.90px;height:2.20px;background:#6d7486"></div>
<div class="t" style="left:2892.00px;top:904px;font:400 24.2px/27px 'Liberation Sans',sans-serif;color:#2a2f42;letter-spacing:0.105px;">Manufacturing&nbsp;Price</div>
<div class="a" style="left:2836.70px;top:965.98px;width:498.70px;height:63.60px;background:#bbbbbb;border:2px solid #b1b1b3;border-radius:9px"></div>
<div class="a" style="left:2854.80px;top:993.08px;width:15.90px;height:2.20px;background:#6d7486"></div>
<div class="a" style="left:2854.80px;top:1001.98px;width:15.90px;height:2.20px;background:#6d7486"></div>
<div class="t" style="left:2892.00px;top:984px;font:400 24.2px/27px 'Liberation Sans',sans-serif;color:#2a2f42;letter-spacing:-0.390px;">Sale&nbsp;Price</div>
<div class="a" style="left:2836.70px;top:1046.01px;width:498.70px;height:63.60px;background:#bbbbbb;border:2px solid #b1b1b3;border-radius:9px"></div>
<div class="a" style="left:2854.80px;top:1073.11px;width:15.90px;height:2.20px;background:#6d7486"></div>
<div class="a" style="left:2854.80px;top:1082.01px;width:15.90px;height:2.20px;background:#6d7486"></div>
<div class="t" style="left:2892.00px;top:1064px;font:400 24.2px/27px 'Liberation Sans',sans-serif;color:#2a2f42;letter-spacing:-0.391px;">Gross&nbsp;Sales</div>
<div class="a" style="left:2836.70px;top:1126.04px;width:498.70px;height:63.60px;background:#bbbbbb;border:2px solid #b1b1b3;border-radius:9px"></div>
<div class="a" style="left:2854.80px;top:1153.14px;width:15.90px;height:2.20px;background:#6d7486"></div>
<div class="a" style="left:2854.80px;top:1162.04px;width:15.90px;height:2.20px;background:#6d7486"></div>
<div class="t" style="left:2892.00px;top:1144px;font:400 24.2px/27px 'Liberation Sans',sans-serif;color:#2a2f42;letter-spacing:0.105px;">Discounts</div>
<div class="a" style="left:2836.70px;top:1206.07px;width:498.70px;height:63.60px;background:#bbbbbb;border:2px solid #b1b1b3;border-radius:9px"></div>
<div class="a" style="left:2854.80px;top:1233.17px;width:15.90px;height:2.20px;background:#6d7486"></div>
<div class="a" style="left:2854.80px;top:1242.07px;width:15.90px;height:2.20px;background:#6d7486"></div>
<div class="t" style="left:2897.80px;top:1224px;font:400 24.2px/27px 'Liberation Sans',sans-serif;color:#2a2f42;letter-spacing:-0.367px;">Sales</div>
<div class="a" style="left:2836.70px;top:1286.10px;width:498.70px;height:63.60px;background:#bbbbbb;border:2px solid #b1b1b3;border-radius:9px"></div>
<div class="a" style="left:2854.80px;top:1313.20px;width:15.90px;height:2.20px;background:#6d7486"></div>
<div class="a" style="left:2854.80px;top:1322.10px;width:15.90px;height:2.20px;background:#6d7486"></div>
<div class="t" style="left:2892.00px;top:1304px;font:400 24.2px/27px 'Liberation Sans',sans-serif;color:#2a2f42;letter-spacing:-1.941px;">COGS</div>
<div class="a" style="left:2836.70px;top:1366.13px;width:498.70px;height:63.60px;background:#bbbbbb;border:2px solid #b1b1b3;border-radius:9px"></div>
<div class="a" style="left:2854.80px;top:1393.23px;width:15.90px;height:2.20px;background:#6d7486"></div>
<div class="a" style="left:2854.80px;top:1402.13px;width:15.90px;height:2.20px;background:#6d7486"></div>
<div class="t" style="left:2892.00px;top:1385px;font:400 24.2px/27px 'Liberation Sans',sans-serif;color:#2a2f42;letter-spacing:0.286px;">Profit</div>
<div class="a" style="left:2836.70px;top:1446.16px;width:498.70px;height:63.60px;background:#bbbbbb;border:2px solid #b1b1b3;border-radius:9px"></div>
<div class="a" style="left:2854.80px;top:1473.26px;width:15.90px;height:2.20px;background:#6d7486"></div>
<div class="a" style="left:2854.80px;top:1482.16px;width:15.90px;height:2.20px;background:#6d7486"></div>
<div class="t" style="left:2886.20px;top:1465px;font:400 24.2px/27px 'Liberation Sans',sans-serif;color:#2a2f42;letter-spacing:-0.229px;">Date</div>
<div class="a" style="left:2836.70px;top:1526.19px;width:498.70px;height:63.60px;background:#bbbbbb;border:2px solid #b1b1b3;border-radius:9px"></div>
<div class="a" style="left:2854.80px;top:1553.29px;width:15.90px;height:2.20px;background:#6d7486"></div>
<div class="a" style="left:2854.80px;top:1562.19px;width:15.90px;height:2.20px;background:#6d7486"></div>
<div class="t" style="left:2886.20px;top:1545px;font:400 24.2px/27px 'Liberation Sans',sans-serif;color:#2a2f42;letter-spacing:0.079px;">Month&nbsp;Number</div>
<svg style="left:0;top:0;" width="3364" height="1588" viewBox="0 0 3364 1588"><ellipse cx="3253.9" cy="517.8" rx="13.5" ry="10.6" fill="none" stroke="#1f2232" stroke-width="2.7"/><circle cx="3253.9" cy="518.0" r="3.95" fill="none" stroke="#1f2232" stroke-width="2.6"/><path d="M3288.9 511.9 H3302.7 M3307.9 505.0 V518.8 M3307.9 511.9 H3314.8 M3288.9 524.0 H3296 M3296 517.1 V530.9 M3301 524.0 H3314.8" stroke="#4d5163" stroke-width="2.2" fill="none"/><ellipse cx="3253.9" cy="597.8" rx="13.5" ry="10.6" fill="none" stroke="#1f2232" stroke-width="2.7"/><circle cx="3253.9" cy="598.0" r="3.95" fill="none" stroke="#1f2232" stroke-width="2.6"/><path d="M3288.9 591.9 H3302.7 M3307.9 585.0 V598.8 M3307.9 591.9 H3314.8 M3288.9 604.0 H3296 M3296 597.1 V610.9 M3301 604.0 H3314.8" stroke="#4d5163" stroke-width="2.2" fill="none"/><ellipse cx="3253.9" cy="677.9" rx="13.5" ry="10.6" fill="none" stroke="#1f2232" stroke-width="2.7"/><circle cx="3253.9" cy="678.1" r="3.95" fill="none" stroke="#1f2232" stroke-width="2.6"/><path d="M3288.9 672.0 H3302.7 M3307.9 665.1 V678.9 M3307.9 672.0 H3314.8 M3288.9 684.1 H3296 M3296 677.2 V691.0 M3301 684.1 H3314.8" stroke="#4d5163" stroke-width="2.2" fill="none"/><ellipse cx="3253.9" cy="757.9" rx="13.5" ry="10.6" fill="none" stroke="#1f2232" stroke-width="2.7"/><circle cx="3253.9" cy="758.1" r="3.95" fill="none" stroke="#1f2232" stroke-width="2.6"/><path d="M3288.9 752.0 H3302.7 M3307.9 745.1 V758.9 M3307.9 752.0 H3314.8 M3288.9 764.1 H3296 M3296 757.2 V771.0 M3301 764.1 H3314.8" stroke="#4d5163" stroke-width="2.2" fill="none"/><ellipse cx="3253.9" cy="837.9" rx="13.5" ry="10.6" fill="none" stroke="#1f2232" stroke-width="2.7"/><circle cx="3253.9" cy="838.1" r="3.95" fill="none" stroke="#1f2232" stroke-width="2.6"/><path d="M3288.9 832.0 H3302.7 M3307.9 825.1 V838.9 M3307.9 832.0 H3314.8 M3288.9 844.1 H3296 M3296 837.2 V851.0 M3301 844.1 H3314.8" stroke="#4d5163" stroke-width="2.2" fill="none"/><ellipse cx="3253.9" cy="918.0" rx="13.5" ry="10.6" fill="none" stroke="#1f2232" stroke-width="2.7"/><circle cx="3253.9" cy="918.2" r="3.95" fill="none" stroke="#1f2232" stroke-width="2.6"/><path d="M3288.9 912.1 H3302.7 M3307.9 905.2 V919.0 M3307.9 912.1 H3314.8 M3288.9 924.2 H3296 M3296 917.3 V931.1 M3301 924.2 H3314.8" stroke="#4d5163" stroke-width="2.2" fill="none"/><ellipse cx="3253.9" cy="998.0" rx="13.5" ry="10.6" fill="none" stroke="#1f2232" stroke-width="2.7"/><circle cx="3253.9" cy="998.2" r="3.95" fill="none" stroke="#1f2232" stroke-width="2.6"/><path d="M3288.9 992.1 H3302.7 M3307.9 985.2 V999.0 M3307.9 992.1 H3314.8 M3288.9 1004.2 H3296 M3296 997.3 V1011.1 M3301 1004.2 H3314.8" stroke="#4d5163" stroke-width="2.2" fill="none"/><ellipse cx="3253.9" cy="1078.0" rx="13.5" ry="10.6" fill="none" stroke="#1f2232" stroke-width="2.7"/><circle cx="3253.9" cy="1078.2" r="3.95" fill="none" stroke="#1f2232" stroke-width="2.6"/><path d="M3288.9 1072.1 H3302.7 M3307.9 1065.2 V1079.0 M3307.9 1072.1 H3314.8 M3288.9 1084.2 H3296 M3296 1077.3 V1091.1 M3301 1084.2 H3314.8" stroke="#4d5163" stroke-width="2.2" fill="none"/><ellipse cx="3253.9" cy="1158.0" rx="13.5" ry="10.6" fill="none" stroke="#1f2232" stroke-width="2.7"/><circle cx="3253.9" cy="1158.2" r="3.95" fill="none" stroke="#1f2232" stroke-width="2.6"/><path d="M3288.9 1152.1 H3302.7 M3307.9 1145.2 V1159.0 M3307.9 1152.1 H3314.8 M3288.9 1164.2 H3296 M3296 1157.3 V1171.1 M3301 1164.2 H3314.8" stroke="#4d5163" stroke-width="2.2" fill="none"/><ellipse cx="3253.9" cy="1238.1" rx="13.5" ry="10.6" fill="none" stroke="#1f2232" stroke-width="2.7"/><circle cx="3253.9" cy="1238.3" r="3.95" fill="none" stroke="#1f2232" stroke-width="2.6"/><path d="M3288.9 1232.2 H3302.7 M3307.9 1225.3 V1239.1 M3307.9 1232.2 H3314.8 M3288.9 1244.3 H3296 M3296 1237.4 V1251.2 M3301 1244.3 H3314.8" stroke="#4d5163" stroke-width="2.2" fill="none"/><ellipse cx="3253.9" cy="1318.1" rx="13.5" ry="10.6" fill="none" stroke="#1f2232" stroke-width="2.7"/><circle cx="3253.9" cy="1318.3" r="3.95" fill="none" stroke="#1f2232" stroke-width="2.6"/><path d="M3288.9 1312.2 H3302.7 M3307.9 1305.3 V1319.1 M3307.9 1312.2 H3314.8 M3288.9 1324.3 H3296 M3296 1317.4 V1331.2 M3301 1324.3 H3314.8" stroke="#4d5163" stroke-width="2.2" fill="none"/><ellipse cx="3253.9" cy="1398.1" rx="13.5" ry="10.6" fill="none" stroke="#1f2232" stroke-width="2.7"/><circle cx="3253.9" cy="1398.3" r="3.95" fill="none" stroke="#1f2232" stroke-width="2.6"/><path d="M3288.9 1392.2 H3302.7 M3307.9 1385.3 V1399.1 M3307.9 1392.2 H3314.8 M3288.9 1404.3 H3296 M3296 1397.4 V1411.2 M3301 1404.3 H3314.8" stroke="#4d5163" stroke-width="2.2" fill="none"/><ellipse cx="3253.9" cy="1478.2" rx="13.5" ry="10.6" fill="none" stroke="#1f2232" stroke-width="2.7"/><circle cx="3253.9" cy="1478.4" r="3.95" fill="none" stroke="#1f2232" stroke-width="2.6"/><path d="M3288.9 1472.3 H3302.7 M3307.9 1465.4 V1479.2 M3307.9 1472.3 H3314.8 M3288.9 1484.4 H3296 M3296 1477.5 V1491.3 M3301 1484.4 H3314.8" stroke="#4d5163" stroke-width="2.2" fill="none"/><ellipse cx="3253.9" cy="1558.2" rx="13.5" ry="10.6" fill="none" stroke="#1f2232" stroke-width="2.7"/><circle cx="3253.9" cy="1558.4" r="3.95" fill="none" stroke="#1f2232" stroke-width="2.6"/><path d="M3288.9 1552.3 H3302.7 M3307.9 1545.4 V1559.2 M3307.9 1552.3 H3314.8 M3288.9 1564.4 H3296 M3296 1557.5 V1571.3 M3301 1564.4 H3314.8" stroke="#4d5163" stroke-width="2.2" fill="none"/></svg>
<div class="a" style="left:0.00px;top:950.00px;width:2354.00px;height:640.00px;background:#fff"></div>
<div class="a" style="left:3.50px;top:953.60px;width:2346.50px;height:640.00px;border:1.5px solid #cfcfd1;background:#fff"></div>
<div class="a" style="left:5.00px;top:1018.00px;width:2344.00px;height:1.60px;background:#e7e7e9"></div>
<div class="a" style="left:20.20px;top:972.00px;width:35.70px;height:35.70px;background:#1c2230;border-radius:50%"></div>
<div class="a" style="left:29.60px;top:988.70px;width:17.00px;height:2.40px;background:#fff"></div>
<div class="a" style="left:36.90px;top:981.40px;width:2.40px;height:17.00px;background:#fff"></div>
<div class="t" style="left:70.80px;top:975px;font:400 23.5px/26px 'Liberation Sans',sans-serif;color:#1c2230;letter-spacing:-0.065px;-webkit-text-stroke:0.94px #1c2230;">Create&nbsp;API</div>
<div class="a" style="left:224.00px;top:974.40px;width:2.00px;height:31.00px;background:#c9c9cb"></div>
<div class="t" style="left:246.70px;top:977px;font:400 23.5px/26px 'Liberation Sans',sans-serif;color:#1c2230;letter-spacing:-0.063px;-webkit-text-stroke:0.94px #1c2230;">GoogleSheet</div>
<svg style="left:0;top:0;" width="3364" height="1588" viewBox="0 0 3364 1588"><path d="M395.8 983.2 L408.2 997 M408.2 983.2 L395.8 997" stroke="#1c2230" stroke-width="2" fill="none"/></svg>
<div class="a" style="left:226.00px;top:1013.90px;width:194.00px;height:4.40px;background:#2bb3f3;border-radius:3px 3px 0 0"></div>
<div class="a" style="left:470.00px;top:1019.60px;width:2.00px;height:570.00px;background:#e6e6e8"></div>
<div class="t" style="left:19.00px;top:1056px;font:400 26px/30px 'Liberation Sans',sans-serif;color:#2c3349;letter-spacing:-0.390px;-webkit-text-stroke:1.04px #2c3349;">GoogleSheet</div>
<svg style="left:0;top:0;" width="3364" height="1588" viewBox="0 0 3364 1588"><g transform="translate(176.4,1058.3) scale(1.0)" fill="none" stroke="#2cb0f5" stroke-width="2" stroke-linejoin="miter"><path d="M0.3 22.2 H22.8"/><path d="M3.9 18.2 L5.2 11.9 L16.6 0.5 L21.4 5.1 L9.8 16.9 Z"/></g><g transform="translate(652,1046.6) scale(1.0)" fill="none" stroke="#2cb0f5" stroke-width="2" stroke-linejoin="miter"><path d="M0.3 22.2 H22.8"/><path d="M3.9 18.2 L5.2 11.9 L16.6 0.5 L21.4 5.1 L9.8 16.9 Z"/></g></svg>
<div class="a" style="left:14.00px;top:1114.60px;width:432.20px;height:107.20px;border:2px solid #ececee;border-radius:10px;background:#fff"></div>
<div class="t" style="left:32.60px;top:1134px;font:400 23.5px/26px 'Liberation Sans',sans-serif;color:#1f2230;letter-spacing:0.265px;-webkit-text-stroke:0.94px #1f2230;">API&nbsp;Configuration</div>
<div class="t" style="left:32.60px;top:1175px;font:400 24.2px/27px 'Liberation Sans',sans-serif;color:#1f2230;letter-spacing:-0.200px;">Triggers,&nbsp;Inputs,&nbsp;and&nbsp;Alerts</div>
<div class="a" style="left:229.90px;top:1221.00px;width:1.70px;height:25.50px;background:#dcdcde"></div>
<div class="a" style="left:14.30px;top:1246.40px;width:431.70px;height:107.60px;border:2.5px solid #2bb3f3;border-radius:10px;background:#f0f7fe"></div>
<svg style="left:0;top:0;" width="3364" height="1588" viewBox="0 0 3364 1588"><g transform="translate(37,1285) scale(0.9863636363636363)"><path d="M2.2 0 H14 L22 8 V27.8 Q22 30 19.8 30 H2.2 Q0 30 0 27.8 V2.2 Q0 0 2.2 0 Z" fill="#12ad4a"/><path d="M14 0 L22 8 H15.6 Q14 8 14 6.4 Z" fill="#0a8a3a"/><path d="M3.7 11.6 H17.9 V21.2 H3.7 Z M5.6 13.4 V15.5 H9.9 V13.4 Z M11.7 13.4 V15.5 H16 V13.4 Z M5.6 17.3 V19.4 H9.9 V17.3 Z M11.7 17.3 V19.4 H16 V17.3 Z" fill="#fff" fill-rule="evenodd"/></g></svg>
<div class="t" style="left:84.40px;top:1265px;font:400 23.5px/26px 'Liberation Sans',sans-serif;color:#262c3d;letter-spacing:-0.040px;-webkit-text-stroke:0.94px #262c3d;">readGsheet</div>
<div class="t" style="left:84.60px;top:1304px;font:400 25.6px/28px 'Liberation Sans',sans-serif;color:#727a8c;letter-spacing:-0.145px;">Demo&nbsp;Gsheets</div>
<div class="a" style="left:229.90px;top:1354.00px;width:1.70px;height:25.00px;background:#dcdcde"></div>
<div class="a" style="left:211.40px;top:1379.40px;width:37.30px;height:37.30px;background:#c6c8d0;border-radius:50%"></div>
<div class="a" style="left:222.40px;top:1396.70px;width:15.40px;height:2.60px;background:#fff"></div>
<div class="a" style="left:228.80px;top:1390.30px;width:2.60px;height:15.40px;background:#fff"></div>
<div class="t" style="left:508.60px;top:1045px;font:400 25.5px/28px 'Liberation Sans',sans-serif;color:#2a3045;letter-spacing:-0.055px;-webkit-text-stroke:1.02px #2a3045;">readGsheet</div>
<div class="a" style="left:1708.30px;top:1040.20px;width:63.50px;height:64.00px;background:#f4f4f4;border:2px solid #dcdcdc;border-radius:9px"></div>
<svg style="left:0;top:0;" width="3364" height="1588" viewBox="0 0 3364 1588"><g fill="none" stroke="#cacaca" stroke-width="2.1" stroke-linejoin="round" stroke-linecap="round"><path d="M1733.6 1063.6 V1060.6 Q1733.6 1059.2 1735 1059.2 H1744.6 Q1746 1059.2 1746 1060.6 V1063.6"/><path d="M1729.2 1064.4 L1730.8 1083.2 Q1730.9 1084.6 1732.3 1084.6 H1747.3 Q1748.7 1084.6 1748.8 1083.2 L1750.4 1064.4 Z" fill="#fff"/><path d="M1726.6 1064.2 H1753"/></g></svg>
<div class="a" style="left:1791.90px;top:1040.20px;width:400.00px;height:64.00px;border:2px solid #dcdcdc;border-radius:9px;background:#fff"></div>
<div class="t" style="left:1868.90px;top:1059px;font:400 23.5px/26px 'Liberation Sans',sans-serif;color:#3d445a;letter-spacing:0.022px;-webkit-text-stroke:0.94px #3d445a;">Demo&nbsp;Gsheets</div>
<div class="a" style="left:2208.00px;top:1039.80px;width:137.80px;height:63.90px;background:#2ab9fa;border-radius:8px;box-shadow:0 3px 5px rgba(0,0,0,.08)"></div>
<div class="a" style="left:2231.80px;top:1053.80px;width:36.20px;height:36.20px;background:#fff;border-radius:50%"></div>
<svg style="left:0;top:0;" width="3364" height="1588" viewBox="0 0 3364 1588"><path d="M2245.6 1066 L2255.4 1072.1 L2245.6 1078.2 Z" fill="#2ab9fa" stroke="#2ab9fa" stroke-width="2.4" stroke-linejoin="round"/></svg>
<div class="t" style="left:2283.00px;top:1058px;font:400 23.5px/26px 'Liberation Sans',sans-serif;color:#fff;letter-spacing:-0.937px;-webkit-text-stroke:0.94px #fff;">Run</div>
<div class="t" style="left:504.40px;top:1141px;font:400 24.2px/27px 'Liberation Sans',sans-serif;color:#1d1d1f;letter-spacing:0.123px;">Action</div>
<div class="a" style="left:504.00px;top:1176.10px;width:1841.60px;height:63.60px;border:2px solid #dcdcdc;border-radius:9px;background:#fff"></div>
<div class="t" style="left:528.50px;top:1195px;font:400 23.5px/26px 'Liberation Sans',sans-serif;color:#3d445a;letter-spacing:0.109px;-webkit-text-stroke:0.94px #3d445a;">Read&nbsp;the&nbsp;whole&nbsp;spreadsheet</div>
<div class="a" style="left:504.00px;top:1304.10px;width:1841.60px;height:63.60px;border:2px solid #dcdcdc;border-radius:9px;background:#fff"></div>
<div class="t" style="left:528.50px;top:1323px;font:400 23.5px/26px 'Liberation Sans',sans-serif;color:#3d445a;letter-spacing:0.190px;-webkit-text-stroke:0.94px #3d445a;">Financial&nbsp;Sample</div>
<div class="a" style="left:504.00px;top:1432.10px;width:1841.60px;height:63.60px;border:2px solid #dcdcdc;border-radius:9px;background:#fff"></div>
<div class="t" style="left:528.50px;top:1451px;font:400 23.5px/26px 'Liberation Sans',sans-serif;color:#3d445a;letter-spacing:-0.157px;-webkit-text-stroke:0.94px #3d445a;">Sales</div>
<div class="t" style="left:504.40px;top:1269px;font:400 24.2px/27px 'Liberation Sans',sans-serif;color:#1d1d1f;letter-spacing:-0.412px;">Spreadsheet</div>
<div class="t" style="left:504.40px;top:1397px;font:400 24.2px/27px 'Liberation Sans',sans-serif;color:#1d1d1f;letter-spacing:-0.480px;">Sheet&nbsp;name</div>
<div class="a" style="left:504.00px;top:1522.30px;width:32.00px;height:31.60px;background:#2bb3f3;border-radius:6.5px"></div>
<svg style="left:0;top:0;" width="3364" height="1588" viewBox="0 0 3364 1588"><path d="M511.6 1538.4 L518 1544.8 L528.6 1532.6" fill="none" stroke="#fff" stroke-width="4" stroke-linecap="round" stroke-linejoin="round"/><circle cx="658.9" cy="1281" r="12.6" fill="#e9f3fe" stroke="#2a8af0" stroke-width="2"/><text x="658.9" y="1288" text-anchor="middle" font-family="Liberation Sans,sans-serif" font-size="20" fill="#2a8af0">?</text><circle cx="651.3" cy="1409" r="12.6" fill="#e9f3fe" stroke="#2a8af0" stroke-width="2"/><text x="651.3" y="1416" text-anchor="middle" font-family="Liberation Sans,sans-serif" font-size="20" fill="#2a8af0">?</text><circle cx="1027" cy="1538.2" r="12.6" fill="#e9f3fe" stroke="#2a8af0" stroke-width="2"/><text x="1027" y="1545.2" text-anchor="middle" font-family="Liberation Sans,sans-serif" font-size="20" fill="#2a8af0">?</text></svg>
<div class="t" style="left:542.00px;top:1526px;font:400 24.2px/27px 'Liberation Sans',sans-serif;color:#1d1d1f;letter-spacing:-0.296px;">Use&nbsp;Row&nbsp;1&nbsp;of&nbsp;the&nbsp;sheet&nbsp;as&nbsp;the&nbsp;Table&nbsp;Header</div>
<svg style="left:0;top:0;" width="3364" height="1588" viewBox="0 0 3364 1588"><path d="M2148.9 1066.2 L2158.15 1077.9 L2167.4 1066.2" fill="none" stroke="#a6a6a6" stroke-width="1.9"/><path d="M2303.2000000000003 1201.8 L2312.05 1213.5 L2320.9 1201.8" fill="none" stroke="#a6a6a6" stroke-width="1.9"/><path d="M2303.2000000000003 1330.0 L2312.05 1341.7 L2320.9 1330.0" fill="none" stroke="#a6a6a6" stroke-width="1.9"/><path d="M2303.2000000000003 1457.8 L2312.05 1469.5 L2320.9 1457.8" fill="none" stroke="#a6a6a6" stroke-width="1.9"/></svg>
<svg style="left:0;top:0;" width="3364" height="1588" viewBox="0 0 3364 1588"><g transform="translate(1821.3,1059.4) scale(0.9863636363636363)"><path d="M2.2 0 H14 L22 8 V27.8 Q22 30 19.8 30 H2.2 Q0 30 0 27.8 V2.2 Q0 0 2.2 0 Z" fill="#12ad4a"/><path d="M14 0 L22 8 H15.6 Q14 8 14 6.4 Z" fill="#0a8a3a"/><path d="M3.7 11.6 H17.9 V21.2 H3.7 Z M5.6 13.4 V15.5 H9.9 V13.4 Z M11.7 13.4 V15.5 H16 V13.4 Z M5.6 17.3 V19.4 H9.9 V17.3 Z M11.7 17.3 V19.4 H16 V17.3 Z" fill="#fff" fill-rule="evenodd"/></g></svg>
</body></html>
